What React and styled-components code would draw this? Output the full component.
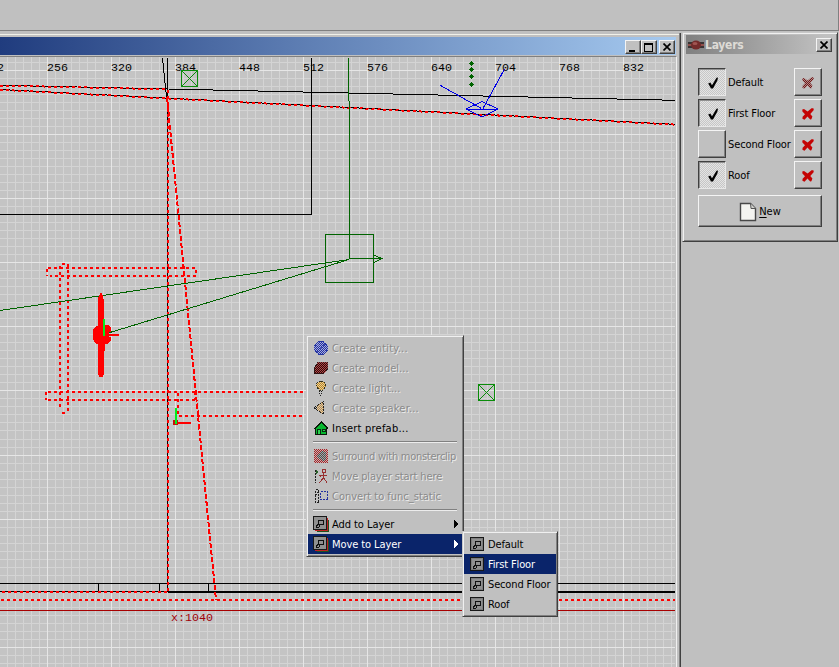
import React from "react";
import styled, { createGlobalStyle, css } from "styled-components";

const Global = createGlobalStyle`
  * { box-sizing: border-box; }
  html, body { margin: 0; padding: 0; background: #c0c0c0; }
  body {
    width: 839px; height: 667px; overflow: hidden; position: relative;
    font-family: "DejaVu Sans Condensed", "DejaVu Sans", sans-serif;
    font-stretch: condensed;
    font-size: 11px; line-height: 14px; color: #000;
  }
  svg { display: block; flex: none; }
`;

const raised = css`
  border: 1px solid;
  border-color: #f4f4f4 #404040 #404040 #f4f4f4;
  box-shadow: inset -1px -1px 0 #808080;
`;
const frame = css`
  background: #c0c0c0;
  border: 1px solid;
  border-color: #c8c8c8 #404040 #404040 #c8c8c8;
  box-shadow: inset 1px 1px 0 #f0f0f0, inset -1px -1px 0 #808080;
`;

const Desktop = styled.div`
  width: 839px; height: 667px; overflow: hidden; display: flex; flex-direction: column;
`;
const TopStrip = styled.div`
  height: 31px; flex: none; border-bottom: 1px solid #808080; border-right: 1px solid #808080;
`;
const Workspace = styled.div`
  flex: 1; min-height: 0; display: flex; align-items: flex-start;
`;
const MapWindow = styled.section`
  width: 681px; height: 640px; margin-top: 2px; padding: 3px 3px 0 0;
  border-right: 1px solid #404040;
  box-shadow: inset -1px 0 0 #808080;
  flex: none; display: flex; flex-direction: column;
  background: linear-gradient(#c0c0c0 1px, #f0f0e8 1px, #f0f0e8 2px, #c0c0c0 2px);
`;
const MapTitle = styled.header`
  height: 20px; width: 676px; padding: 3px 1px 0 0; display: flex; justify-content: flex-end;
  background: linear-gradient(90deg, #203c7e, #5a7ab0 42%, #a6caf0);
  border-top: 1px solid #c0c0c0; border-bottom: 1px solid #c0c0c0;
`;
const MapBody = styled.div`
  width: 677px; border-top: 1px solid #808080; border-right: 1px solid #f0f0f0;
  background: #c4c4c4;
`;
const CaptionButton = styled.button`
  ${raised}
  width: 16px; height: 14px; padding: 0; background: #c0c0c0;
  margin-left: ${(p) => (p.$gap ? 2 : 0)}px;
  display: flex; align-items: center; justify-content: center;
`;
const LayersWindow = styled.aside`
  ${frame}
  width: 156px; height: 210px; margin: 1px 0 0 1px; padding: 2px 3px; flex: none;
`;
const LayersTitle = styled.header`
  height: 19px; padding: 0 2px; display: flex; align-items: center;
  background: linear-gradient(90deg, #808080, #c0c0c0 94%);
  color: #dedbd6; font-weight: bold; font-size: 12px;
  span { flex: 1; margin-left: 1px; letter-spacing: -0.25px; }
`;
const LayerList = styled.div`
  margin: 14px 12px 0 12px; display: flex; flex-direction: column; gap: 3px; width: 124px;
`;
const LayerRow = styled.div`
  display: grid; grid-template-columns: 28px 1fr 28px; align-items: center; height: 28px;
`;
const LayerName = styled.span`
  padding: 2px 0 0 2px; white-space: nowrap; letter-spacing: -0.12px;
`;
const PushButton = styled.button`
  ${raised}
  width: 28px; height: 28px; padding: 1px 0 0 0; background: #c0c0c0;
  display: flex; align-items: center; justify-content: center;
  ${(p) => p.$down && css`
    padding: 2px 0 0 2px;
    border-color: #404040 #e8e8e8 #e8e8e8 #404040;
    box-shadow: inset 1px 1px 0 #909090;
    background: repeating-conic-gradient(#e4e4e4 0 25%, #c6c6c6 0 50%) 0 0 / 2px 2px;
  `}
`;
const NewButton = styled(PushButton)`
  width: 124px; height: 32px; margin-top: 3px; gap: 2px; font: inherit;
  u { text-underline-offset: 2px; }
`;

const Popup = styled.div`
  ${frame}
  position: absolute; left: ${(p) => p.$x}px; top: ${(p) => p.$y}px; width: ${(p) => p.$w}px;
  padding: 2px 1px;
`;
const MenuItem = styled.div`
  height: 20px; display: flex; align-items: center; padding: 0 3px 0 5px;
  white-space: nowrap;
  span { flex: 1; margin-left: 3px; padding-top: 2px; letter-spacing: ${(p) => p.$ls || 0}px; }
  ${(p) => p.$off && css`color: #8a8a8a; text-shadow: 1px 1px 0 #ececec;`}
  ${(p) => p.$on && css`background: #0a246a; color: #fff;`}
`;
const Separator = styled.hr`
  height: 2px; margin: 3px 5px; border: 0; background: linear-gradient(#808080 50%, #ececec 50%);
`;

/* ---------- icons ---------- */
const MinimizeMark = () => (
  <svg width="10" height="9" viewBox="0 0 10 9" shapeRendering="crispEdges"><rect x="1" y="7" width="6" height="2" /></svg>
);
const MaximizeMark = () => (
  <svg width="10" height="9" viewBox="0 0 10 9" shapeRendering="crispEdges"><path fillRule="evenodd" d="M0 0H9V9H0ZM1 2V8H8V2Z" /></svg>
);
const CloseMark = () => (
  <svg width="8" height="8" viewBox="0 0 8 8"><path d="M.5 .5 7.5 7.5M7.5 .5 .5 7.5" stroke="#000" strokeWidth="1.7" /></svg>
);
const Check = () => (
  <svg width="14" height="14" viewBox="0 0 14 14">
    <path d="M2.2 7.5 4.3 6.6 6 9.2 10.5 1.7 12 1.5 11.4 4.5 7 12.6H5Z" fill="#000" />
  </svg>
);
const Cross = ({ off }) => (
  <svg width="14" height="14" viewBox="0 0 14 14">
    <path d="M1.3 2.5 3 2 6.6 4.6 10.5 1.3 12.4 1.2 12.8 3 9.3 7 11.4 9.6 10.4 12.2 9.2 12.6 6.5 9.6 3.5 12.8 1.4 11.8 1.6 9.8 4 7.2 1.4 4.4Z" fill={off ? "url(#dCross)" : "#c40404"} />
  </svg>
);
const Page = () => (
  <svg width="18" height="20" viewBox="0 0 18 20">
    <path d="M1.5 1.5H11.5L16.5 6.5V18.5H1.5Z" fill="#f4f4f0" stroke="#484848" strokeWidth="1.4" />
    <path d="M11.5 1.5 12 6.5H16.5" fill="#d0d0cc" stroke="#555" />
  </svg>
);
const DarkOrb = () => (
  <svg width="16" height="14" viewBox="0 0 16 14">
    <path d="M0 5H16M0 9H16" stroke="#3a3434" strokeWidth="2" /><path d="M0 7H16" stroke="#90504c" strokeWidth="2" />
    <ellipse cx="8" cy="7" rx="5" ry="4.6" fill="#742b2b" /><ellipse cx="7" cy="5.5" rx="2.5" ry="1.5" fill="#a05552" />
  </svg>
);
const Checker = ({ id, a, b }) => (
  <pattern id={id} width="2" height="2" patternUnits="userSpaceOnUse">
    <rect width="2" height="2" fill={b || "#c0c0c0"} /><rect width="1" height="1" fill={a} /><rect x="1" y="1" width="1" height="1" fill={a} />
  </pattern>
);
const Patterns = () => (
  <svg width="0" height="0" shapeRendering="crispEdges">
    <defs>
      <Checker id="dBlue" a="#2030a0" b="#a8acdc" /><Checker id="dRed" a="#a02428" b="#ccb0b0" />
      <Checker id="dCross" a="#701818" b="#b08c8c" />
      <Checker id="dMaroon" a="#300808" b="#b04848" /><Checker id="dGold" a="#c08820" b="#e4cc9c" />
      <Checker id="dTan" a="#b08850" b="#e0cba8" /><Checker id="dBlack" a="#181818" />
      <Checker id="dGrey" a="#505050" b="#a4a4a4" />
    </defs>
  </svg>
);
const Icon = ({ children }) => (
  <svg width="16" height="16" viewBox="0 0 16 16" shapeRendering="crispEdges">{children}</svg>
);
const EntityIcon = () => <Icon><circle cx="8" cy="8" r="7" fill="url(#dBlue)" /><circle cx="8" cy="8" r="6.5" fill="none" stroke="#2838a0" strokeDasharray="1 1" /><path d="M4 4 12 12M12 4 4 12" stroke="#4450b0" strokeDasharray="1 1" /></Icon>;
const ModelIcon = () => <Icon><path d="M1 8 5 2H15V9L11 14H1Z" fill="url(#dMaroon)" /><path d="M1.5 8 5 2.5H14.5V9L11 13.5H1.5Z" fill="none" stroke="#302020" strokeDasharray="1 1" /></Icon>;
const LightIcon = () => <Icon><path d="M8 1 12 3 13 6 10 10H6L3 6 4 3Z" fill="url(#dGold)" stroke="#303020" strokeDasharray="2 1" /><path d="M6 11H10M6 13H10M7 15H9" stroke="#202020" strokeDasharray="1 1" /></Icon>;
const SpeakerIcon = () => <Icon><path d="M2 8 9 2 11 4V12L9 14Z" fill="url(#dTan)" /><path d="M1.5 7.5 10.5 1.5V14.5L1.5 8.5" fill="none" stroke="#202020" strokeDasharray="2 1" /><path d="M2 6H4V10H2Z" fill="url(#dBlack)" /></Icon>;
const HouseIcon = () => <Icon><path d="M1 8 8 1 15 8V9H14V15H2V9H1Z" fill="#081808" /><path d="M3 8 8 3 13 8V14H3Z" fill="#08b830" /><path d="M4 9H8V14H4ZM9 9H13V12H9Z" fill="#082810" /><path d="M5 10H7V14H5ZM10 10H12V11H10Z" fill="#30d050" /></Icon>;
const ClipIcon = () => <Icon><rect x="1" y="1" width="14" height="14" fill="url(#dRed)" /><path d="M3 8 8 3 13 4V12L10 13Z" fill="url(#dGrey)" /></Icon>;
const StartIcon = () => <Icon><path d="M2.5 2V15" stroke="#202020" strokeDasharray="2 1" /><path d="M3 2 6 4 3 6Z" fill="#286028" /><g stroke="#983030" fill="none"><rect x="9.5" y="1.5" width="3" height="3" /><path d="M6 7.5H14M10.5 5V10L6 15M10.5 10 14 14.5M7 7V9" /></g></Icon>;
const ConvertIcon = () => <Icon><g fill="none" stroke="#202020" strokeDasharray="2 1"><rect x="2.5" y="1.5" width="3" height="3" /><path d="M1.5 6.5H5.5V14.5H2.5V7" /></g><rect x="7.5" y="3.5" width="7" height="8" fill="none" stroke="#2030a0" strokeDasharray="2 1" /></Icon>;
const Glyph = () => <path d="M5 8V4H11V9H7V11H6V9H5V10H4V11H6V12H3V9H4V8ZM6 5V8H10V5Z" fillRule="evenodd" fill="#101010" />;
const LayerIcon = () => <Icon><rect x="1.5" y="1.5" width="13" height="13" fill="#909090" stroke="#181818" /><rect x="2.5" y="2.5" width="11" height="11" fill="none" stroke="#7c7c7c" /><g transform="translate(1,1)"><Glyph /></g></Icon>;
const LayersIcon = () => <Icon><path d="M15.5 4V15.5H4" fill="none" stroke="#205020" /><path d="M14.5 2V14.5H2" fill="none" stroke="#c02020" /><rect x=".5" y=".5" width="13" height="13" fill="#909090" stroke="#181818" /><Glyph /></Icon>;
const Arrow = () => <svg width="5" height="8" viewBox="0 0 5 8" shapeRendering="crispEdges"><path d="M0 0 4.5 4 0 8Z" fill="currentColor" /></svg>;

/* ---------- orthographic map view ---------- */
const range = (from, to, step) => {
  const out = [];
  for (let v = from; v < to; v += step) out.push(v);
  return out;
};
const COLUMNS = ["256", "320", "384", "448", "512", "576", "640", "704", "768", "832"];
const Coordinate = styled.text`
  font-family: "Liberation Mono", monospace; font-size: 11.67px; fill: ${(p) => p.$color || "#000"};
`;

function Grid() {
  return (
    <g>
      <path stroke="#d4d4d4" d={range(7.5, 676, 8).map((x) => `M${x} 57V667`).join("") + range(62.3, 667, 8.015).map((y) => `M0 ${Math.floor(y) + 0.5}H675`).join("")} />
      <path stroke="#e6e6e6" d={range(47.5, 676, 64).map((x) => `M${x} 57V667`).join("") + range(70.3, 667, 64.12).map((y) => `M0 ${Math.floor(y) + 0.5}H675`).join("")} />
    </g>
  );
}

function MapView() {
  return (
    <svg width="676" height="610" viewBox="0 57 676 610" shapeRendering="crispEdges" fill="none">
      <Grid />
      <g>
        {COLUMNS.map((c, i) => <Coordinate key={c} x={47 + i * 64} y="71">{c}</Coordinate>)}
        <Coordinate x="-3" y="71">2</Coordinate>
      </g>
      <g stroke="#000">
        <path d="M162.5 58 166.5 97M167.5 58V592M168 89 675 100.3M0 85.3 168 89M0 89.5 675 124.3M311.5 58V214.5H0M0 583.5H675M98.5 583V591M159.5 583V591M208.5 583V591M0 591.5H168" />
        <path d="M168 592H675" strokeWidth="2" />
      </g>
      <g stroke="#ff0000" strokeWidth="2" strokeDasharray="3 3">
        <path d="M0 85.5 168 89.3M0 89.8 675 124.6M168 90V592M2 592H168M1 600H675" />
        <path d="M167 97 216 600" strokeDasharray="5 2" />
        <path d="M48 268H196V276H50M47 269V276M60 266V410M68 264V413M62 264H68M62 413H68" />
        <path d="M48 392H303M48 400H196M46 392V400M178 393V416H303M195 392V400" />
      </g>
      <g stroke="#006400">
        <path d="M348.5 58V101M349.5 101V258.5H381M325.5 234.5H373.5V282.5H325.5ZM374 255 381.5 258.5 374 262.5M349 259.5 0 310.5M349 259.5 105 334" />
      </g>
      <g stroke="#0a8c0a">
        <path d="M181.5 70.5H197.5V86.5H181.5ZM478.5 384.5H494.5V400.5H478.5Z" />
        <path d="M182 71 197 86M197 71 182 86M479 385 494 400M494 385 479 400" />
      </g>
      <g fill="#006400">
        {[63, 69, 76, 84].map((y) => <path key={y} d={`M469 ${y}h1v-1h1v-1h1v1h1v1h1v1h-1v1h-1v1h-1v-1h-1v-1h-1z`} />)}
      </g>
      <g stroke="#0000e6">
        <path d="M440.5 85.5 481.5 108.5M504.5 69 483 108.5M466 109 482 101.5 498 109 482 117Z" />
        <path d="M466 109.5H498" />
      </g>
      <g fill="#ff0000">
        <path d="M99 295H100V293H102V295H103V299H104V325H108L111 328V332H109V337H111V340L108 344H105V351H104V375H103V377H99V375H98V344H96L93 339V330L96 326H98V297H99Z" />
        <rect x="109" y="334" width="10" height="2" /><rect x="176" y="422" width="15" height="2" /><rect x="173" y="420" width="5" height="5" fill="#c81008" />
        <rect x="103" y="319" width="2" height="17" fill="#00f01e" /><rect x="175" y="408" width="2" height="16" fill="#00f01e" />
      </g>
      <path d="M0 610.5H675" stroke="#a80000" />
      <Coordinate x="171" y="621" $color="#a00008">x:1040</Coordinate>
    </svg>
  );
}

const LAYERS = [
  { name: "Default", shown: true, locked: true },
  { name: "First Floor", shown: true },
  { name: "Second Floor", shown: false },
  { name: "Roof", shown: true },
];

export default function App() {
  return (
    <>
      <Global />
      <Desktop>
        <TopStrip />
        <Workspace>
          <MapWindow>
            <MapTitle>
              <CaptionButton aria-label="Minimize"><MinimizeMark /></CaptionButton>
              <CaptionButton aria-label="Maximize"><MaximizeMark /></CaptionButton>
              <CaptionButton $gap aria-label="Close"><CloseMark /></CaptionButton>
            </MapTitle>
            <MapBody><MapView /></MapBody>
          </MapWindow>
          <LayersWindow>
            <LayersTitle>
              <DarkOrb /><span>Layers</span>
              <CaptionButton aria-label="Close"><CloseMark /></CaptionButton>
            </LayersTitle>
            <LayerList>
              {LAYERS.map((l) => (
                <LayerRow key={l.name}>
                  <PushButton $down={l.shown} aria-label={l.name}>{l.shown && <Check />}</PushButton>
                  <LayerName>{l.name}</LayerName>
                  <PushButton aria-label="Delete"><Cross off={l.locked} /></PushButton>
                </LayerRow>
              ))}
              <NewButton><Page /><span><u>N</u>ew</span></NewButton>
            </LayerList>
          </LayersWindow>
        </Workspace>
      </Desktop>
      <Popup $x={306} $y={335} $w={158}>
        <MenuItem $off $ls={0.2}><EntityIcon /><span>Create entity...</span></MenuItem>
        <MenuItem $off $ls={0.02}><ModelIcon /><span>Create model...</span></MenuItem>
        <MenuItem $off $ls={0.08}><LightIcon /><span>Create light...</span></MenuItem>
        <MenuItem $off $ls={0.2}><SpeakerIcon /><span>Create speaker...</span></MenuItem>
        <MenuItem $ls={0.22}><HouseIcon /><span>Insert prefab...</span></MenuItem>
        <Separator />
        <MenuItem $off $ls={-0.26}><ClipIcon /><span>Surround with monsterclip</span></MenuItem>
        <MenuItem $off $ls={-0.1}><StartIcon /><span>Move player start here</span></MenuItem>
        <MenuItem $off><ConvertIcon /><span>Convert to func_static</span></MenuItem>
        <Separator />
        <MenuItem $ls={-0.06}><LayersIcon /><span>Add to Layer</span><Arrow /></MenuItem>
        <MenuItem $on $ls={-0.08}><LayersIcon /><span>Move to Layer</span><Arrow /></MenuItem>
      </Popup>
      <Popup $x={462} $y={531} $w={96}>
        {LAYERS.map((l) => (
          <MenuItem key={l.name} $on={l.name === "First Floor"} $ls={-0.15}><LayerIcon /><span>{l.name}</span></MenuItem>
        ))}
      </Popup>
      <Patterns />
    </>
  );
}
